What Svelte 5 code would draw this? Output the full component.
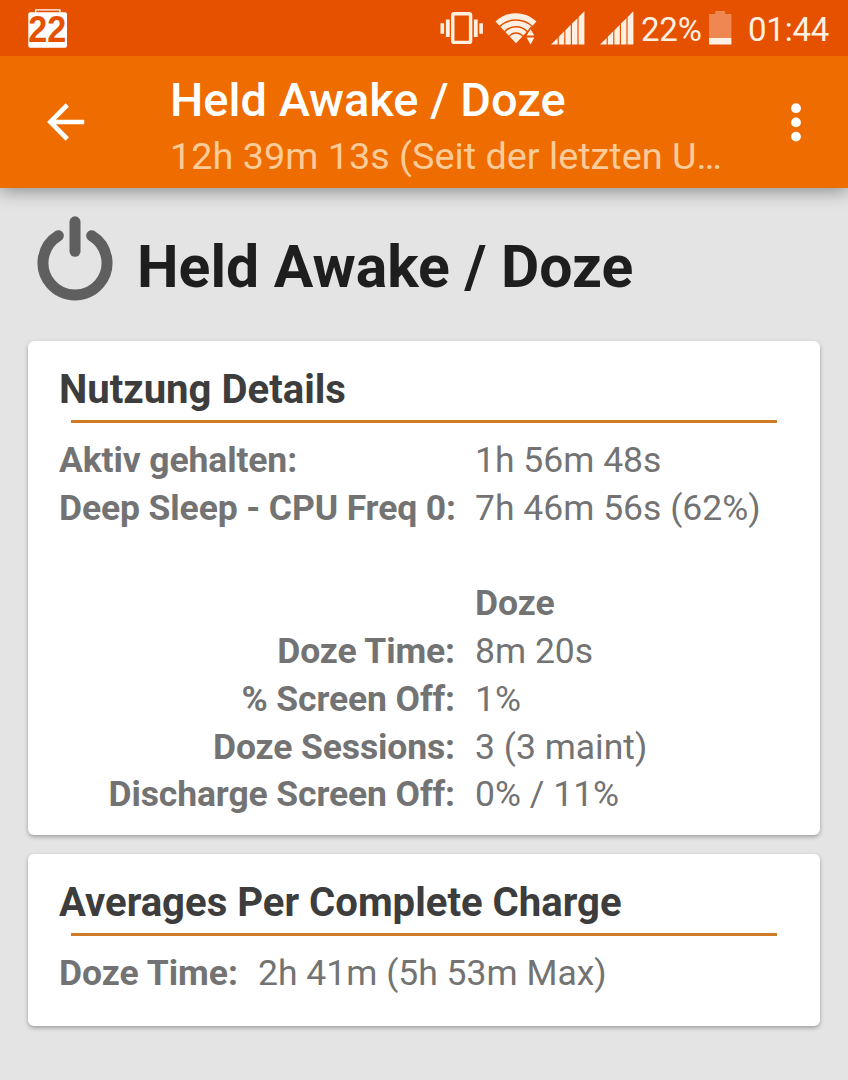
<script lang="ts">
  type Row = { label: string; value: string; bold?: boolean };

  const title = 'Held Awake / Doze';
  const subtitle = '12h 39m 13s (Seit der letzten U…';

  const usage: Row[] = [
    { label: 'Aktiv gehalten:', value: '1h 56m 48s' },
    { label: 'Deep Sleep - CPU Freq 0:', value: '7h 46m 56s (62%)' },
  ];

  const doze: Row[] = [
    { label: '', value: 'Doze', bold: true },
    { label: 'Doze Time:', value: '8m 20s' },
    { label: '% Screen Off:', value: '1%' },
    { label: 'Doze Sessions:', value: '3 (3 maint)' },
    { label: 'Discharge Screen Off:', value: '0% / 11%' },
  ];
</script>

{#snippet signal()}
  <svg class="signal" width="34" height="34" viewBox="0 0 34 34">
    <path d="M0 33.5 6.6 27v6.5zM7.8 25.7l5.4-5.4v13.2H7.8zM14.4 19.2l5.4-5.4v19.7h-5.4zM21 12.6l5.4-5.4v26.300H21zM27.6 6.100l5.800-5.800v33.200h-5.800z" />
  </svg>
{/snippet}

<div class="screen">
  <div class="status-bar">
    <svg class="calendar" width="40" height="40" viewBox="0 0 40 40">
      <path d="M7.7 3.5V.9h24.2v2.6" fill="none" stroke="#fff" stroke-width="1.4" />
      <rect x=".3" y="3.2" width="38.7" height="35.6" rx="2" fill="#fff" />
      <text x=".3" y="32.7" textLength="38" lengthAdjust="spacingAndGlyphs">22</text>
    </svg>

    <div class="status-icons">
      <svg class="vibrate" width="44" height="34" viewBox="0 0 44 34">
        <rect x="12.8" y="2.8" width="17.8" height="28.6" rx="1.5" fill="none" stroke="#fff0e2" stroke-width="3.4" />
        <path d="M.5 12.200h3.600v10.500H.5zM5.900 8.500h3.800v17.500H5.900zM33.900 8.500h3.800v17.500h-3.800zM39.300 12.200h3.600v10.500h-3.600z" fill="#fff0e2" />
      </svg>
      <svg class="wifi" width="43" height="34" viewBox="0 0 43 34">
        <path d="M.5 10.600C12-.600 30-.600 41.500 10.600L21 32.300z" fill="#fff0e2" />
        <path class="gap" d="M4 16C13.500 6.600 28.500 6.600 38 16M9 21.200C15.500 14 26.500 14 33 21.200M13.500 26C17.700 20.600 24.300 20.600 28.500 26" />
        <path d="M35.500 15.500 41.300 24.600 35.500 35 29.700 24.600z" fill="#e65100" />
        <path d="M35.500 18.300 39.400 24.500h-7.800zM31.600 26.500h7.800l-3.900 7z" fill="#fff0e2" />
      </svg>
      {@render signal()}
      {@render signal()}
      <span class="percent">22%</span>
      <svg class="battery" width="23" height="34" viewBox="0 0 23 34">
        <path d="M6.300 0h9.800v3h6.300v24H0V3h6.300z" fill="#ef8850" />
        <path d="M0 27h22.400v6.500H0z" fill="#fff0e6" />
      </svg>
      <span class="clock">01:44</span>
    </div>
  </div>

  <header class="toolbar">
    <svg class="back" width="40" height="40" viewBox="0 0 40 40">
      <path d="M38.200 20H4M21.300 3 4.300 20l17 17" />
    </svg>
    <div class="toolbar-text">
      <div class="toolbar-title">{title}</div>
      <div class="toolbar-subtitle">{subtitle}</div>
    </div>
    <svg class="menu" width="10" height="40" viewBox="0 0 10 40">
      <circle cx="5" cy="6.2" r="4.9" />
      <circle cx="5" cy="20.4" r="4.9" />
      <circle cx="5" cy="34.6" r="4.9" />
    </svg>
  </header>

  <main>
    <div class="heading">
      <svg class="power" width="80" height="92" viewBox="0 0 80 92">
        <path d="M23.300 23.700A32 32 0 1 0 56.700 23.700" />
        <path d="M40 9.800V39.300" />
      </svg>
      <h1>{title}</h1>
    </div>

    <section class="card">
      <h2>Nutzung Details</h2>
      <hr />
      <div class="rows">
        {#each usage as row}
          <span class="label">{row.label}</span>
          <span>{row.value}</span>
        {/each}
        <span class="spacer"></span>
        {#each doze as row}
          <span class="label right">{row.label}</span>
          <span class:bold={row.bold}>{row.value}</span>
        {/each}
      </div>
    </section>

    <section class="card averages">
      <h2>Averages Per Complete Charge</h2>
      <hr />
      <div class="rows">
        <span class="label">Doze Time:</span>
        <span>2h 41m (5h 53m Max)</span>
      </div>
    </section>
  </main>
</div>

<style>
  :global(body) {
    background: #e4e4e4;
  }

  .screen {
    width: 848px;
    height: 1080px;
    overflow: hidden;
    background: #e4e4e4;
    font-family: Roboto, sans-serif;
    white-space: nowrap;
  }

  svg {
    display: block;
    flex: none;
  }

  .status-bar {
    position: relative;
    z-index: 1;
    display: flex;
    justify-content: space-between;
    height: 56px;
    box-sizing: border-box;
    padding: 9px 19px 0 28px;
    background: #e65100;
    color: #fff0e2;
  }

  .calendar text {
    font: bold 36px 'Liberation Sans', sans-serif;
    fill: #e65100;
  }

  .status-icons {
    display: flex;
    align-items: flex-start;
    padding-top: 2px;
    font-size: 33px;
    line-height: 38px;
  }

  .wifi {
    margin-left: 11px;
  }

  .wifi .gap {
    fill: none;
    stroke: #e65100;
    stroke-width: 1.5;
  }

  .signal {
    margin-left: 15px;
    fill: #fff0e2;
  }

  .wifi + .signal {
    margin-left: 13px;
  }

  .percent {
    width: 60px;
    margin-left: 7px;
    letter-spacing: -0.2px;
  }

  .battery {
    margin-left: 8px;
  }

  .clock {
    width: 81px;
    margin-left: 16px;
    letter-spacing: -0.2px;
  }

  .toolbar {
    position: relative;
    display: flex;
    height: 132px;
    box-sizing: border-box;
    padding: 0 47px 0 46px;
    background: #ef6c00;
    box-shadow: 0 4px 16px rgba(0, 0, 0, 0.36);
  }

  .back {
    margin-top: 46px;
  }

  .back path {
    fill: none;
    stroke: #fff;
    stroke-width: 4.6;
  }

  .toolbar-text {
    flex: 1;
    padding: 16px 0 0 84px;
  }

  .toolbar-title {
    color: #fff;
    font-size: 47px;
    font-weight: 500;
    line-height: 55px;
  }

  .toolbar-subtitle {
    color: #fbcb9a;
    font-size: 37.8px;
    line-height: 58px;
  }

  .menu {
    margin-top: 46px;
    fill: #fff;
  }

  main {
    padding: 0 28px;
  }

  .heading {
    display: flex;
    height: 153px;
    padding-left: 7px;
  }

  .power {
    margin-top: 24px;
  }

  .power path {
    fill: none;
    stroke: #5f5f5f;
    stroke-width: 11;
    stroke-linecap: round;
  }

  h1 {
    margin: 44px 0 0 22px;
    color: #1e1e1e;
    font-size: 58.9px;
    font-weight: 700;
    line-height: 70px;
  }

  .card {
    height: 494px;
    box-sizing: border-box;
    margin-bottom: 19px;
    padding: 24px 31px 0;
    background: #fff;
    border-radius: 6px;
    box-shadow: 0 2px 4px rgba(0, 0, 0, 0.3);
  }

  .averages {
    height: 172px;
  }

  h2 {
    margin: 0;
    color: #3d3d3d;
    font-size: 40.1px;
    font-weight: 700;
    line-height: 49px;
  }

  hr {
    height: 3px;
    margin: 6px 12px 14px;
    border: 0;
    background: #cf7a26;
  }

  .rows {
    display: grid;
    grid-template-columns: 396px auto;
    column-gap: 20px;
    color: #737373;
    font-size: 35.5px;
    line-height: 47.75px;
  }

  .averages .rows {
    grid-template-columns: auto 1fr;
    line-height: 47px;
  }

  .label,
  .bold {
    font-weight: 700;
  }

  .rows .label {
    letter-spacing: -0.12px;
  }

  .averages .rows .label {
    letter-spacing: 0;
  }

  .right {
    text-align: right;
  }

  .spacer {
    grid-column: 1 / -1;
    height: 47.75px;
  }
</style>
